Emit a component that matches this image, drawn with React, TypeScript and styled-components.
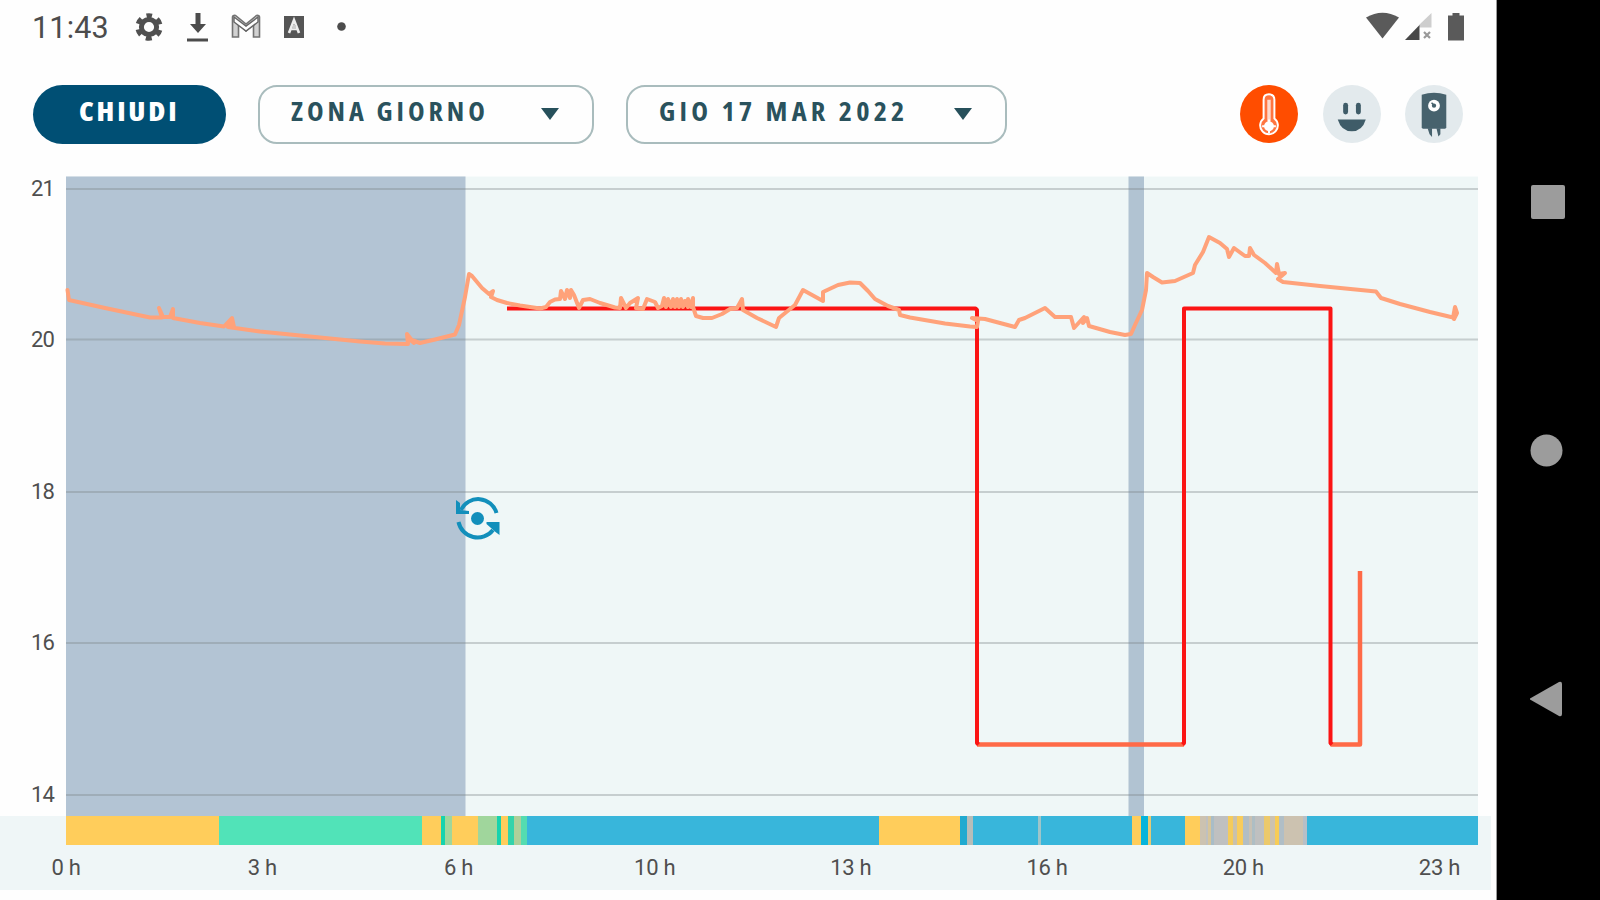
import React from "react";
import styled, { createGlobalStyle } from "styled-components";

const GlobalStyle = createGlobalStyle`
  * {
    box-sizing: border-box;
  }

  body {
    margin: 0;
    overflow: hidden;
    background: #fff;
    font-family: Roboto, "Liberation Sans", sans-serif;
  }
`;

const Device = styled.div`
  display: flex;
  width: 1600px;
  height: 900px;
  background: #000;
`;

const Screen = styled.main`
  display: flex;
  flex-direction: column;
  width: 1497px;
  background: #fefefe;
  border-right: 1px solid #9a9a9a;
`;

const NavRail = styled.nav`
  display: flex;
  flex-direction: column;
  justify-content: space-between;
  align-items: center;
  width: 103px;
  padding: 184px 2px 183px 0;
`;

const StatusBar = styled.header`
  display: flex;
  align-items: center;
  justify-content: space-between;
  height: 54px;
  padding: 0 32px 0 32px;
  color: #4c4c4c;
`;

const StatusGroup = styled.div`
  display: flex;
  align-items: center;
`;

const StatusIcons = styled(StatusGroup)`
  gap: 22.5px;
`;

const Clock = styled.span`
  width: 102px;
  font-size: 30.5px;
  line-height: 54px;
  padding-top: 2px;
  letter-spacing: 0.2px;
`;

const Toolbar = styled.section`
  display: flex;
  justify-content: space-between;
  height: 122px;
  padding: 31px 33px 0;
`;

const Filters = styled.div`
  display: flex;
  gap: 32px;
`;

const Modes = styled.div`
  display: flex;
  gap: 24.5px;
`;

const Label = styled.span<{ $scale: number }>`
  display: inline-block;
  font-family: "Open Sans", "Noto Sans", sans-serif;
  font-stretch: 75%;
  line-height: 52px;
  white-space: nowrap;
  transform: scaleX(${(p) => p.$scale});
  transform-origin: left;
`;

const CloseButton = styled.button`
  width: 193px;
  height: 59px;
  padding: 0 0 7px 46px;
  border: 0;
  border-radius: 30px;
  background: #004f74;
  color: #fff;
  font-size: 27px;
  font-weight: 800;
  letter-spacing: 2.6px;
  text-align: left;
`;

const Select = styled.button<{ $width: number; $spacing: number }>`
  display: flex;
  align-items: center;
  justify-content: space-between;
  width: ${(p) => p.$width}px;
  height: 59px;
  padding: 0 33px 7px 31px;
  border: 2px solid #a9bcbd;
  border-radius: 19px;
  background: #fefefe;
  color: #2a525d;
  font-size: 26.5px;
  font-weight: 700;
  letter-spacing: ${(p) => p.$spacing}px;
`;

const Caret = styled.span`
  width: 0;
  margin-top: 5px;
  border: 9.5px solid transparent;
  border-top: 12px solid #27505b;
  border-bottom: 0;
`;

const ModeButton = styled.button<{ $active?: boolean }>`
  width: 58px;
  height: 58px;
  padding: 0;
  border: 0;
  border-radius: 50%;
  background: ${(p) => (p.$active ? "#ff4d00" : "#e3eaed")};
`;

const Plot = styled.svg`
  display: block;
  flex: none;
`;

const AxisLabel = styled.text`
  font-family: Roboto, sans-serif;
  font-size: 22px;
  letter-spacing: -0.8px;
  fill: #4f4f4f;
`;

const Timeline = styled.section`
  width: 1491px;
  height: 74px;
  background: #eff6f7;
`;

const Strip = styled.div`
  display: flex;
  height: 29px;
  margin-left: 66px;
`;

const Segment = styled.div`
  flex: none;
`;

const Hours = styled.div`
  display: flex;
  margin-left: -32px;
  padding-top: 8px;
`;

const Hour = styled.span`
  flex: 0 0 196.2px;
  color: #4f4f4f;
  font-size: 22px;
  line-height: 30px;
  text-align: center;
  letter-spacing: -0.3px;
`;

const BLUE = "#38b6db";
const YELLOW = "#ffcd5b";
const GREEN = "#51e3b8";
const MIXED = "#a0d69c";
const GREY = "#bfc0c0";
const TAN = "#ccc2b0";

// [end x, colour]; every segment starts where the previous one ends
const SEGMENTS: [number, string][] = [
  [219, YELLOW],
  [422, GREEN],
  [441, YELLOW],
  [445, "#16d3ae"],
  [452, MIXED],
  [478, YELLOW],
  [497, MIXED],
  [501, "#16d3ae"],
  [508, YELLOW],
  [514, "#33d3ab"],
  [521, "#add09a"],
  [527, "#54dcb0"],
  [879, BLUE],
  [960, YELLOW],
  [967, "#20aad0"],
  [973, "#b6bdb9"],
  [1038, BLUE],
  [1041, "#9fc5c9"],
  [1132, BLUE],
  [1141, YELLOW],
  [1148, "#05b4dc"],
  [1151, "#e6c974"],
  [1185, BLUE],
  [1200, YELLOW],
  [1206, TAN],
  [1208, GREY],
  [1211, "#d7c59a"],
  [1214, "#a9bdc7"],
  [1228, GREY],
  [1233, "#f4cb5c"],
  [1237, "#c9c1ad"],
  [1243, "#f8cc5c"],
  [1249, "#b2bec4"],
  [1252, "#c8c1b4"],
  [1255, "#aebec4"],
  [1264, GREY],
  [1270, "#ecc96b"],
  [1275, TAN],
  [1279, "#f7cc57"],
  [1284, "#b0bec6"],
  [1303, TAN],
  [1307, "#b7bfc7"],
  [1478, BLUE],
];

const HOURS = ["0 h", "3 h", "6 h", "10 h", "13 h", "16 h", "20 h", "23 h"];

const GRID = [
  { label: "21", y: 189 },
  { label: "20", y: 339.5 },
  { label: "18", y: 492 },
  { label: "16", y: 643 },
  { label: "14", y: 795 },
];

const TEMPERATURE = `
  67.5,290 69,300 105,308 150,317.5 162,317.5 159,308 163,317 170,317 173,309 173,318
  200,323 224,326.5 232,318 234,327 230,322 228,327 260,331.5 310,336.5 360,341.5 385,343.5
  408,344 407,334 414,343 409,339 420,343 435,339.5 455,334.5 459,325 465,297 469,274 472,276
  482,288 489,294 493,291 491,297 497,300 507,303 520,305.5 540,308.5 546,307 550,302 555,299.5
  560,299 561,291 565,299 567,290 570,298 571,290 574,295 579,308 583,300 590,299 600,303
  615,307.5 620,308 621,298 626,308 630,303 638,298 636,308 643,309 647,299 655,302 658,308
  662,306 664,298 666,307 668,299 671,307 673,299 675,307 677,299 679,307 681,299 683,307
  685,301 688,307 688,299 691,307 693,298 693,307 696,316 703,318 712,318 722,314 730,309
  737,308 742,299 743,310 757,318 776,327 779,318 790,309 795,305 803,290 823,301 823,292
  838,285 850,282.5 860,283 868,291 875,299 888,306 899,310 900,315 910,317.5 945,323.5
  970,326.5 977,327 978,321 972,318 985,319 1000,323 1015,327 1019,320 1025,318 1045,308
  1055,317 1071,317 1074,328 1084,317 1083,323 1087,318 1089,326 1110,332 1125,335 1131,334
  1135,325 1142,310 1146,290 1147,273 1153,277 1162,282.5 1175,281 1193,273 1195,265 1203,252
  1209,237 1220,243 1227,249 1229,257 1234,248 1245,256 1249,256 1250,248 1254,255 1265,263
  1276,273 1277,264 1279,274 1285,273 1278,279 1283,282 1320,286 1376,291.5 1381,298 1400,304
  1430,312 1453,317.5 1455,307 1457,313 1454,319
`;

const SettingsIcon = () => (
  <svg width="30" height="54" viewBox="0 0 30 54" fill="none">
    <circle cx="15" cy="27" r="7.6" stroke="#505050" strokeWidth="5" />
    <circle
      cx="15"
      cy="27"
      r="11.4"
      stroke="#505050"
      strokeWidth="4.6"
      strokeDasharray="6 5.94"
      strokeDashoffset="3"
      transform="rotate(-90 15 27)"
    />
  </svg>
);

const DownloadIcon = () => (
  <svg width="22" height="54" viewBox="0 0 22 54" fill="#4c4c4c">
    <path d="M8.5 13h5v11H19l-8 9-8-9h5.500zM0 38.500h21v3H0z" />
  </svg>
);

const MailIcon = () => (
  <svg width="30" height="54" viewBox="0 0 30 54" fill="none">
    <path
      d="M1.500 37V17q0-2 3-1.500L15 24l10.500-8.500q3-.5 3 1.500v20h-6V24L15 31l-7.500-7v13z"
      fill="#d2d2d2"
      stroke="#737373"
      strokeWidth="1.600"
    />
    <path d="M3 17l12 9 12-9v5l-12 9-12-9z" fill="#fff" stroke="#666" strokeWidth="1.400" />
  </svg>
);

const BadgeIcon = () => (
  <svg width="20" height="54" viewBox="0 0 20 54" fill="none">
    <path d="M0 16h20v22H0z" fill="#555" />
    <path d="M5 33l5-13 5 13M7 29h6" stroke="#eee" strokeWidth="2.600" />
    <path d="M9 25h3v4H8z" fill="#ccc" />
  </svg>
);

const WifiIcon = () => (
  <svg width="33" height="54" viewBox="0 0 33 54" fill="#5a5a5a">
    <path d="M0 17.500Q16.500 8 33 17.500L16.500 38.500z" />
  </svg>
);

const SignalIcon = () => (
  <svg width="27" height="54" viewBox="0 0 27 54">
    <path d="M26.500 13v14.500H14V25z" fill="#cecece" />
    <path d="M0 40l14.500-15v15z" fill="#484848" />
    <path d="M19 32l6 6m0-6l-6 6" stroke="#999" strokeWidth="2.200" />
  </svg>
);

const BatteryIcon = () => (
  <svg width="16" height="54" viewBox="0 0 16 54" fill="#5a5a5a">
    <path d="M4.500 13h7v2.500H16V40.500H0V15.500h4.500z" />
  </svg>
);

const ThermometerIcon = () => (
  <svg width="58" height="58" viewBox="0 0 59 59" fill="none" stroke="#fff">
    <path
      d="M24 34V15q0-5.500 5.500-5.500T35 15v19a9 9 0 1 1-11 0z"
      fill="#ff7540"
      strokeWidth="2"
    />
    <path d="M29.500 15v22" strokeWidth="3.500" stroke="#ffd9cb" />
    <circle cx="29.500" cy="42" r="5" fill="#fff" stroke="none" />
    <path d="M29.500 35v14M22.500 42h14" strokeWidth="2" />
  </svg>
);

const SmileIcon = () => (
  <svg width="58" height="58" viewBox="0 0 59 59" fill="#3f5c68">
    <rect x="20.500" y="18" width="5" height="12" rx="2.500" />
    <rect x="33.500" y="18" width="5" height="12" rx="2.500" />
    <path d="M15 35h28.500q-3.500 12-14.200 12T15 35z" />
  </svg>
);

const BoilerIcon = () => (
  <svg width="58" height="58" viewBox="0 0 59 59" fill="#47626d">
    <path d="M17 10q12.500-4 25 0v33q0 1.500-1.500 1.500h-22Q17 44.500 17 43z" />
    <path d="M23 44h4.500v9l-2.500-3zM32 44h4v6l-2 2.500z" />
    <circle cx="29.500" cy="21" r="6" fill="#fff" />
    <circle cx="29.500" cy="21" r="2.200" />
    <path d="M27 18l3 3" stroke="#47626d" strokeWidth="1.500" />
  </svg>
);

const Chart = () => (
  <Plot width="1496" height="640" viewBox="0 176 1496 640" fill="none">
    <rect x="66" y="176.500" width="1412" height="640" fill="#eff7f7" />
    <rect x="66" y="176.500" width="399.500" height="640" fill="#b3c4d4" />
    <rect x="1128.500" y="176.500" width="15.500" height="640" fill="#b1c3d2" />

    {GRID.map(({ label, y }) => (
      <g key={label}>
        <AxisLabel x="31" y={y + 7}>
          {label}
        </AxisLabel>
        <path d={`M66 ${y}H1478`} stroke="#7c8588" strokeOpacity="0.36" strokeWidth="2" />
      </g>
    ))}

    {/* set point */}
    <g strokeWidth="4" strokeLinejoin="round">
      <path d="M977 744.500H1184M1330.500 744.500H1360V571" stroke="#ff6a47" strokeWidth="4.500" />
      <path
        d="M507 308.500H975.500L977 310V743L978.500 744.500M1182.500 744.500L1184 743V308.500H1330.500V743L1332 744.500"
        stroke="#fb1414"
      />
    </g>

    <polyline
      points={TEMPERATURE}
      stroke="#ffa27a"
      strokeWidth="4"
      strokeLinejoin="round"
      strokeLinecap="round"
    />

    {/* programme change marker */}
    <g stroke="#128fbb" strokeWidth="4">
      <circle cx="477.500" cy="518.500" r="6.500" fill="#128fbb" stroke="none" />
      <path d="M461 510A19 19 0 0 1 496.500 513M458.500 522A19.500 19.500 0 0 0 493 530" />
      <path
        d="M456 500l4 3v7l9 1v3h-13zM499.500 535l-4-3-9-8v-2h13z"
        fill="#128fbb"
        stroke="none"
      />
    </g>
  </Plot>
);

export default function App() {
  return (
    <Device>
      <GlobalStyle />
      <Screen>
        <StatusBar>
          <StatusGroup>
            <Clock>11:43</Clock>
            <StatusIcons>
              <SettingsIcon />
              <DownloadIcon />
              <MailIcon />
              <BadgeIcon />
              <svg width="24" height="54" viewBox="0 0 24 54">
                <circle cx="15.500" cy="26.500" r="4.300" fill="#4c4c4c" />
              </svg>
            </StatusIcons>
          </StatusGroup>
          <StatusGroup>
            <WifiIcon />
            <svg width="6" height="1" />
            <SignalIcon />
            <svg width="16" height="1" />
            <BatteryIcon />
          </StatusGroup>
        </StatusBar>

        <Toolbar>
          <Filters>
            <CloseButton>
              <Label $scale={1.08}>CHIUDI</Label>
            </CloseButton>
            <Select $width={336} $spacing={3.7}>
              <Label $scale={1.06}>ZONA GIORNO</Label>
              <Caret />
            </Select>
            <Select $width={381} $spacing={3.9}>
              <Label $scale={1.07}>GIO 17 MAR 2022</Label>
              <Caret />
            </Select>
          </Filters>
          <Modes>
            <ModeButton $active>
              <ThermometerIcon />
            </ModeButton>
            <ModeButton>
              <SmileIcon />
            </ModeButton>
            <ModeButton>
              <BoilerIcon />
            </ModeButton>
          </Modes>
        </Toolbar>

        <Chart />

        <Timeline>
          <Strip>
            {SEGMENTS.map(([end, color], i) => (
              <Segment
                key={end}
                style={{
                  width: end - (i ? SEGMENTS[i - 1][0] : 66),
                  background: color,
                }}
              />
            ))}
          </Strip>
          <Hours>
            {HOURS.map((hour) => (
              <Hour key={hour}>{hour}</Hour>
            ))}
          </Hours>
        </Timeline>
      </Screen>

      <NavRail>
        <svg width="36" height="36" viewBox="0 0 36 36">
          <rect x="1" y="1" width="34" height="34" rx="2" fill="#9c9c9c" />
        </svg>
        <svg width="36" height="36" viewBox="0 0 36 36">
          <circle cx="16.500" cy="17.500" r="16" fill="#9c9c9c" />
        </svg>
        <svg width="36" height="36" viewBox="0 0 36 36">
          <path d="M-1 18L29 1q3-1 3 2v30q0 3-3 2z" fill="#9c9c9c" />
        </svg>
      </NavRail>
    </Device>
  );
}
